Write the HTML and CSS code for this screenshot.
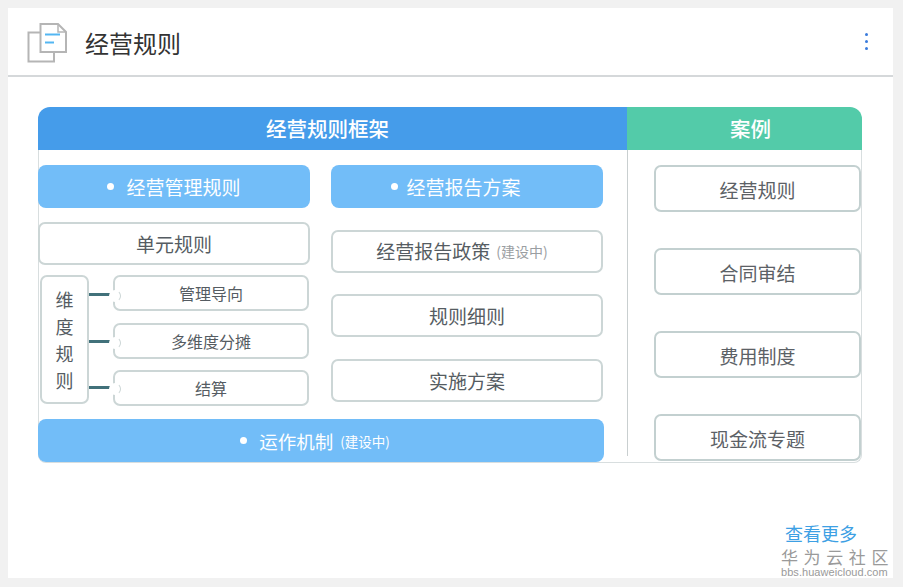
FILE: index.html
```html
<!DOCTYPE html>
<html lang="zh">
<head>
<meta charset="utf-8">
<title>经营规则</title>
<link rel="stylesheet" href="styles.css">
</head>
<body>
<div class="card">
  <header class="top">
    <svg class="logo" width="40" height="40" viewBox="0 0 40 40" fill="none">
      <path d="M13 9.5H1.5V38.5H27V29" stroke="#b5b5b5" stroke-width="2"/>
      <path d="M13.5 1H31L39 9V29H13.5Z" fill="#fff" stroke="#b5b5b5" stroke-width="2"/>
      <path d="M31 1V9H39" stroke="#b5b5b5" stroke-width="1.5"/>
      <path d="M18 11.5H33" stroke="#53b6f2" stroke-width="2"/>
      <path d="M18 19.5H27" stroke="#53b6f2" stroke-width="2"/>
    </svg>
    <h1 class="title">经营规则</h1>
    <div class="kebab"><i></i><i></i><i></i></div>
  </header>
  <main class="content">
    <section class="diagram">
      <div class="heads">
        <div class="head head-blue">经营规则框架</div>
        <div class="head head-green">案例</div>
      </div>
      <div class="panel">
        <div class="left">
          <div class="cols">
            <div class="col col-a">
              <div class="pill"><span class="dot"></span>经营管理规则</div>
              <div class="box box-unit">单元规则</div>
              <div class="dims">
                <div class="dim-label"><span>维</span><span>度</span><span>规</span><span>则</span></div>
                <div class="dim-items">
                  <div class="dim-item">管理导向</div>
                  <div class="dim-item">多维度分摊</div>
                  <div class="dim-item">结算</div>
                </div>
              </div>
            </div>
            <div class="col col-b">
              <div class="pill pill-tight"><span class="dot"></span>经营报告方案</div>
              <div class="box box-policy">经营报告政策<small class="note">(建设中)</small></div>
              <div class="box">规则细则</div>
              <div class="box">实施方案</div>
            </div>
          </div>
          <div class="pill pill-wide"><span class="dot"></span>运作机制<small class="note-white">(建设中)</small></div>
        </div>
        <div class="divider"></div>
        <div class="right">
          <div class="case">经营规则</div>
          <div class="case">合同审结</div>
          <div class="case">费用制度</div>
          <div class="case">现金流专题</div>
        </div>
      </div>
    </section>
    <div class="foot">
      <a class="more">查看更多</a>
      <div class="mark">
        <div class="mark-cn">华为云社区</div>
        <div class="mark-en">bbs.huaweicloud.com</div>
      </div>
    </div>
  </main>
</div>
</body>
</html>
```
FILE: styles.css
```css
* { box-sizing: border-box; }
html, body { margin: 0; height: 100%; }
body {
  background: #f1f1f1;
  padding: 8px 10px 9px 8px;
  font-family: "Noto Sans CJK SC", "Noto Sans", sans-serif;
  overflow: hidden;
}
.card { background: #fff; height: 570px; }
.top {
  height: 69px;
  border-bottom: 2px solid #d5d8da;
  display: flex;
  align-items: center;
  padding: 0 20px 0 19px;
}
.logo { flex: none; margin-top: 3px; }
.title {
  margin: 3px 0 0 18px;
  font-size: 24px;
  font-weight: 400;
  color: #333;
  line-height: 32px;
  flex: 1;
}
.kebab { display: flex; flex-direction: column; gap: 4px; margin-right: 5px; }
.kebab i { width: 3px; height: 3px; border-radius: 50%; background: #3a7bdc; display: block; }
.content { padding: 30px 31px 0 30px; }
.diagram { width: 824px; }
.heads { display: flex; height: 43px; }
.head {
  display: flex;
  align-items: center;
  justify-content: center;
  color: #fff;
  font-size: 20.5px;
  font-weight: 500;
  padding-bottom: 1px;
}
.head-blue { width: 589px; background: #459cea; border-top-left-radius: 12px; padding-right: 10px; }
.head-green { flex: 1; background: #53cba9; border-top-right-radius: 12px; padding-left: 12px; }
.panel {
  display: flex;
  height: 313px;
  border: 1px solid #d8dedf;
  border-top: 0;
  border-radius: 0 0 8px 8px;
}
.left { width: 588px; padding-top: 15px; display: flex; flex-direction: column; }
.cols { display: flex; gap: 21px; margin-left: -1px; }
.col { width: 272px; display: flex; flex-direction: column; }
.col-b { gap: 21.5px; }
.pill {
  height: 43px;
  background: #72bdf8;
  border-radius: 8px;
  color: #fff;
  font-size: 19px;
  display: flex;
  align-items: center;
  justify-content: center;
}
.dot { width: 7px; height: 7px; border-radius: 50%; background: #fff; margin-right: 12px; flex: none; }
.pill-tight { padding-right: 22px; }
.pill-tight .dot { margin-right: 8px; }
.pill-wide { width: 566px; margin: 13px 0 0 -1px; font-size: 18.5px; padding-right: 12px; }
.note-white { font-size: 13.5px; margin-left: 7px; }
.box {
  height: 43px;
  border: 2px solid #ccd6d6;
  border-radius: 7px;
  background: #fff;
  color: #555c62;
  font-size: 19px;
  display: flex;
  align-items: center;
  justify-content: center;
}
.box-policy { padding: 0 10px 2px 0; }
.box-unit { margin-top: 14px; }
.note { font-size: 14px; color: #9a9ea2; margin-left: 6px; margin-top: 2px; }
.dims { display: flex; margin-top: 10px; align-items: flex-start; }
.dim-label {
  width: 49px;
  height: 129px;
  margin-left: 2px;
  border: 2px solid #ccd6d6;
  border-radius: 7px;
  color: #555c62;
  font-size: 18px;
  display: flex;
  flex-direction: column;
  align-items: center;
  justify-content: center;
  gap: 1px;
  line-height: 26px;
}
.dim-items { margin-left: 24px; width: 196px; display: flex; flex-direction: column; gap: 11.5px; }
.dim-item {
  position: relative;
  height: 36px;
  border: 2px solid #ccd6d6;
  border-radius: 7px;
  color: #555c62;
  font-size: 16px;
  display: flex;
  align-items: center;
  justify-content: center;
}
.dim-item::before {
  content: "";
  position: absolute;
  left: -26px;
  top: 16px;
  width: 25px;
  height: 3px;
  background: #41717a;
}
.dim-item:nth-child(2)::before { top: 15px; }
.dim-item:nth-child(3)::before { top: 14px; }
.dim-item::after {
  content: "";
  position: absolute;
  left: -6px;
  top: 13px;
  width: 10px;
  height: 10px;
  border-radius: 50%;
  background: #fff;
  border: 1px solid transparent;
  border-right-color: #ccd6d6;
}
.dim-item:nth-child(2)::after { top: 12px; }
.dim-item:nth-child(3)::after { top: 11px; }
.divider { width: 1px; background: #c9cfd0; margin-bottom: 6px; }
.right {
  flex: 1;
  padding: 15px 0 0 26px;
  display: flex;
  flex-direction: column;
  gap: 36px;
}
.case {
  width: 207px;
  height: 47px;
  border: 2px solid #c3d0d0;
  border-radius: 7px;
  background: #fff;
  color: #5c6166;
  font-size: 19px;
  padding-top: 2px;
  display: flex;
  align-items: center;
  justify-content: center;
}
.foot { display: flex; flex-direction: column; align-items: flex-end; margin: 60px -27px 0 0; }
.more { color: #3da0e4; font-size: 18px; line-height: 22px; margin-right: 32px; margin-top: -1px; }
.mark { width: 108px; color: #9a9a9a; margin-top: 3px; }
.mark-cn { font-size: 17px; line-height: 20px; letter-spacing: 5.6px; white-space: nowrap; }
.mark-en { font-family: "Liberation Sans", sans-serif; font-size: 11px; line-height: 11px; letter-spacing: 0.05px; white-space: nowrap; }
```
